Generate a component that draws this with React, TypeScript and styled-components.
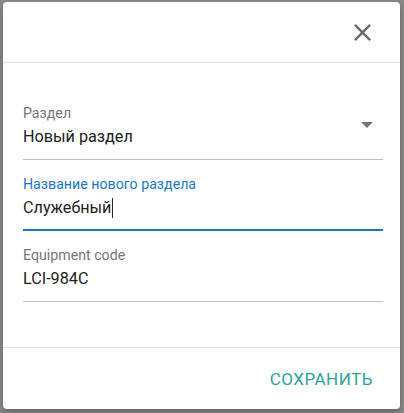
import React from 'react'
import styled, { createGlobalStyle } from 'styled-components'

const GlobalStyle = createGlobalStyle`
  html, body {
    margin: 0;
    padding: 0;
    background: #8a8a8a;
    font-family: Roboto, "Liberation Sans", Arial, sans-serif;
  }
`

const Page = styled.div`
  width: 404px;
  height: 413px;
  padding: 2px 0 0 3px;
  box-sizing: border-box;
`

const Dialog = styled.div`
  width: 397px;
  height: 407px;
  background: #fff;
  border-radius: 4px;
  box-shadow: 0 3px 6px rgb(0 0 0 / 30%);
  display: flex;
  flex-direction: column;
`

const Header = styled.div`
  height: 60px;
  display: flex;
  align-items: center;
  justify-content: flex-end;
  padding-right: 23px;
  border-bottom: 1px solid #e0e0e0;
`

const CloseButton = styled.button`
  border: none;
  background: none;
  padding: 0;
  width: 29px;
  height: 29px;
  display: flex;
  cursor: pointer;
  color: #6b6b6b;
`

const Content = styled.div`
  flex: 1;
  padding: 41px 17px 0 20px;
  display: flex;
  flex-direction: column;
  gap: 15px;
  border-bottom: 1px solid #e0e0e0;
`

const Field = styled.div<{ $focused?: boolean }>`
  display: flex;
  flex-direction: column;
  position: relative;
  border-bottom: ${p => (p.$focused ? '2px solid #1976d2' : '1px solid #bdbdbd')};
  padding-bottom: ${p => (p.$focused ? '8px' : '9px')};
`

const Label = styled.div<{ $focused?: boolean }>`
  font-size: 14.2px;
  line-height: 18px;
  color: ${p => (p.$focused ? '#1976d2' : '#757575')};
`

const Value = styled.div`
  font-size: 16.2px;
  line-height: 26px;
  padding-top: 2px;
  color: #212121;
  display: flex;
  align-items: center;
`

const Caret = styled.span`
  display: inline-block;
  width: 1px;
  height: 20px;
  background: #212121;
  margin-left: 1px;
`

const Arrow = styled.svg`
  position: absolute;
  right: 10px;
  top: 18px;
`

const Footer = styled.div`
  height: 61px;
  display: flex;
  align-items: center;
  justify-content: flex-end;
  padding-right: 19px;
`

const SaveButton = styled.button`
  border: none;
  background: none;
  padding: 6px 8px;
  font-family: inherit;
  font-size: 17px;
  letter-spacing: 0.5px;
  color: #26a69a;
  text-transform: uppercase;
  cursor: pointer;
`

const App = () => {
  return (
    <>
      <GlobalStyle />
      <Page>
        <Dialog>
          <Header>
            <CloseButton aria-label="close">
              <svg width="29" height="29" viewBox="0 0 24 24" fill="currentColor">
                <path d="M19 6.41L17.59 5 12 10.59 6.41 5 5 6.41 10.59 12 5 17.59 6.41 19 12 13.41 17.59 19 19 17.59 13.41 12z" />
              </svg>
            </CloseButton>
          </Header>
          <Content>
            <Field>
              <Label>Раздел</Label>
              <Value>Новый раздел</Value>
              <Arrow width="12" height="6" viewBox="0 0 12 6">
                <polygon points="0,0 12,0 6,6" fill="#757575" />
              </Arrow>
            </Field>
            <Field $focused>
              <Label $focused>Название нового раздела</Label>
              <Value>
                Служебный
                <Caret />
              </Value>
            </Field>
            <Field>
              <Label>Equipment code</Label>
              <Value>LCI-984C</Value>
            </Field>
          </Content>
          <Footer>
            <SaveButton>Сохранить</SaveButton>
          </Footer>
        </Dialog>
      </Page>
    </>
  )
}

export default App
